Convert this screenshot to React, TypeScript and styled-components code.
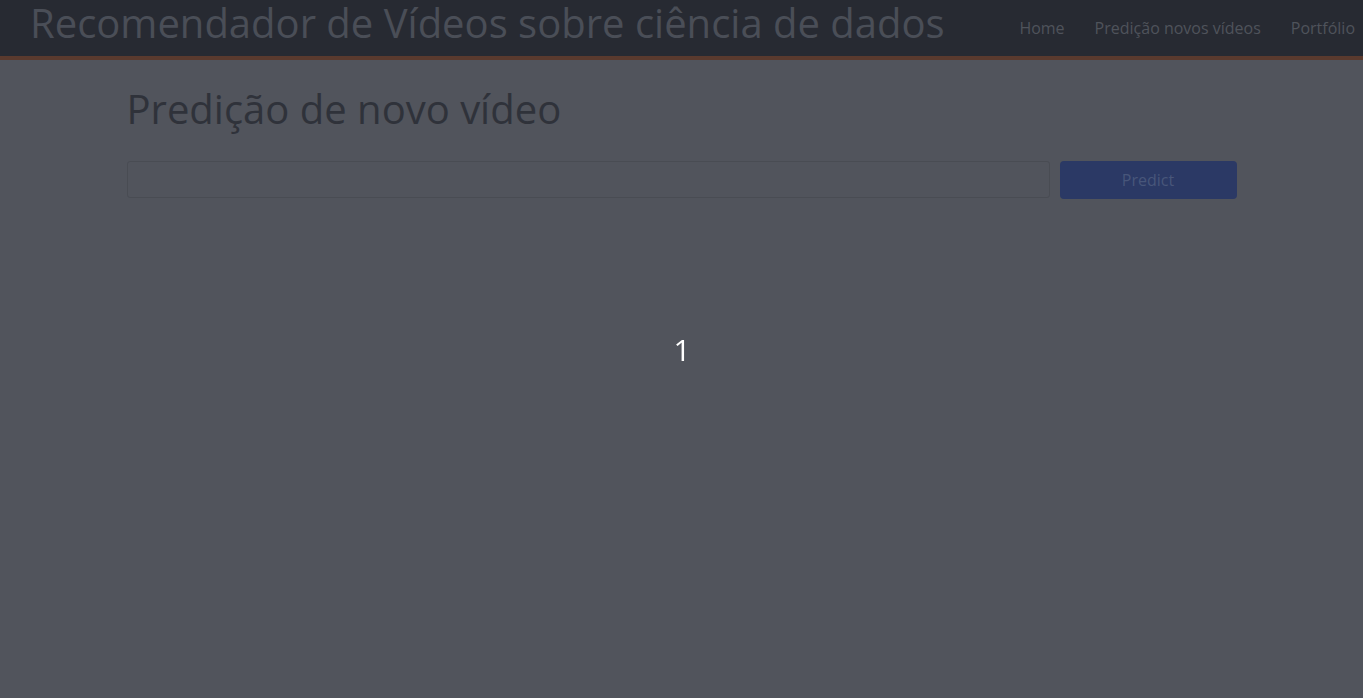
import React from "react";
import styled, { createGlobalStyle } from "styled-components";

const Global = createGlobalStyle`
  html, body { margin: 0; padding: 0; }
  body {
    background: #51545c;
    font-family: "Open Sans", "Noto Sans", sans-serif;
    height: 698px;
    overflow: hidden;
  }
`;

const Navbar = styled.header`
  height: 56px;
  background: #272a32;
  border-bottom: 4px solid #5a3a2e;
  display: flex;
  align-items: center;
  justify-content: space-between;
  padding-left: 30px;
  box-sizing: content-box;
`;

const Brand = styled.div`
  align-self: flex-start;
  padding-top: 3px;
  font-size: 40px;
  line-height: 40px;
  color: #4a4e57;
  white-space: nowrap;
`;

const NavList = styled.nav`
  display: flex;
  align-items: center;
  margin-right: -7px;
`;

const NavLink = styled.a`
  font-size: 16px;
  color: #4f535b;
  padding: 0 15px;
  text-decoration: none;
  white-space: nowrap;
`;

const Container = styled.main`
  width: 1110px;
  margin: 0 auto;
  padding: 0 15px;
`;

const Title = styled.h1`
  font-size: 40px;
  font-weight: 400;
  color: #2f323a;
  margin: 25px 0 0;
  line-height: 48px;
`;

const Row = styled.div`
  display: flex;
  gap: 10px;
  margin-top: 28px;
`;

const Input = styled.input`
  flex: 1;
  height: 37px;
  box-sizing: border-box;
  background: #51545c;
  border: 1px solid #494c53;
  border-radius: 3px;
  outline: none;
`;

const Button = styled.button`
  width: 177px;
  height: 38px;
  background: #2b3965;
  border: none;
  border-radius: 4px;
  color: #48567a;
  font-family: "Open Sans", sans-serif;
  font-size: 16px;
`;

const Overlay = styled.div`
  position: fixed;
  inset: 0;
  display: flex;
  align-items: center;
  justify-content: center;
  pointer-events: none;
`;

const Counter = styled.span`
  color: #ffffff;
  font-size: 30px;
  margin-top: 0px;
  margin-left: 1px;
`;

export default function App() {
  return (
    <>
      <Global />
      <Navbar>
        <Brand>Recomendador de Vídeos sobre ciência de dados</Brand>
        <NavList>
          <NavLink>Home</NavLink>
          <NavLink>Predição novos vídeos</NavLink>
          <NavLink>Portfólio</NavLink>
        </NavList>
      </Navbar>
      <Container>
        <Title>Predição de novo vídeo</Title>
        <Row>
          <Input />
          <Button>Predict</Button>
        </Row>
      </Container>
      <Overlay>
        <Counter>1</Counter>
      </Overlay>
    </>
  );
}
